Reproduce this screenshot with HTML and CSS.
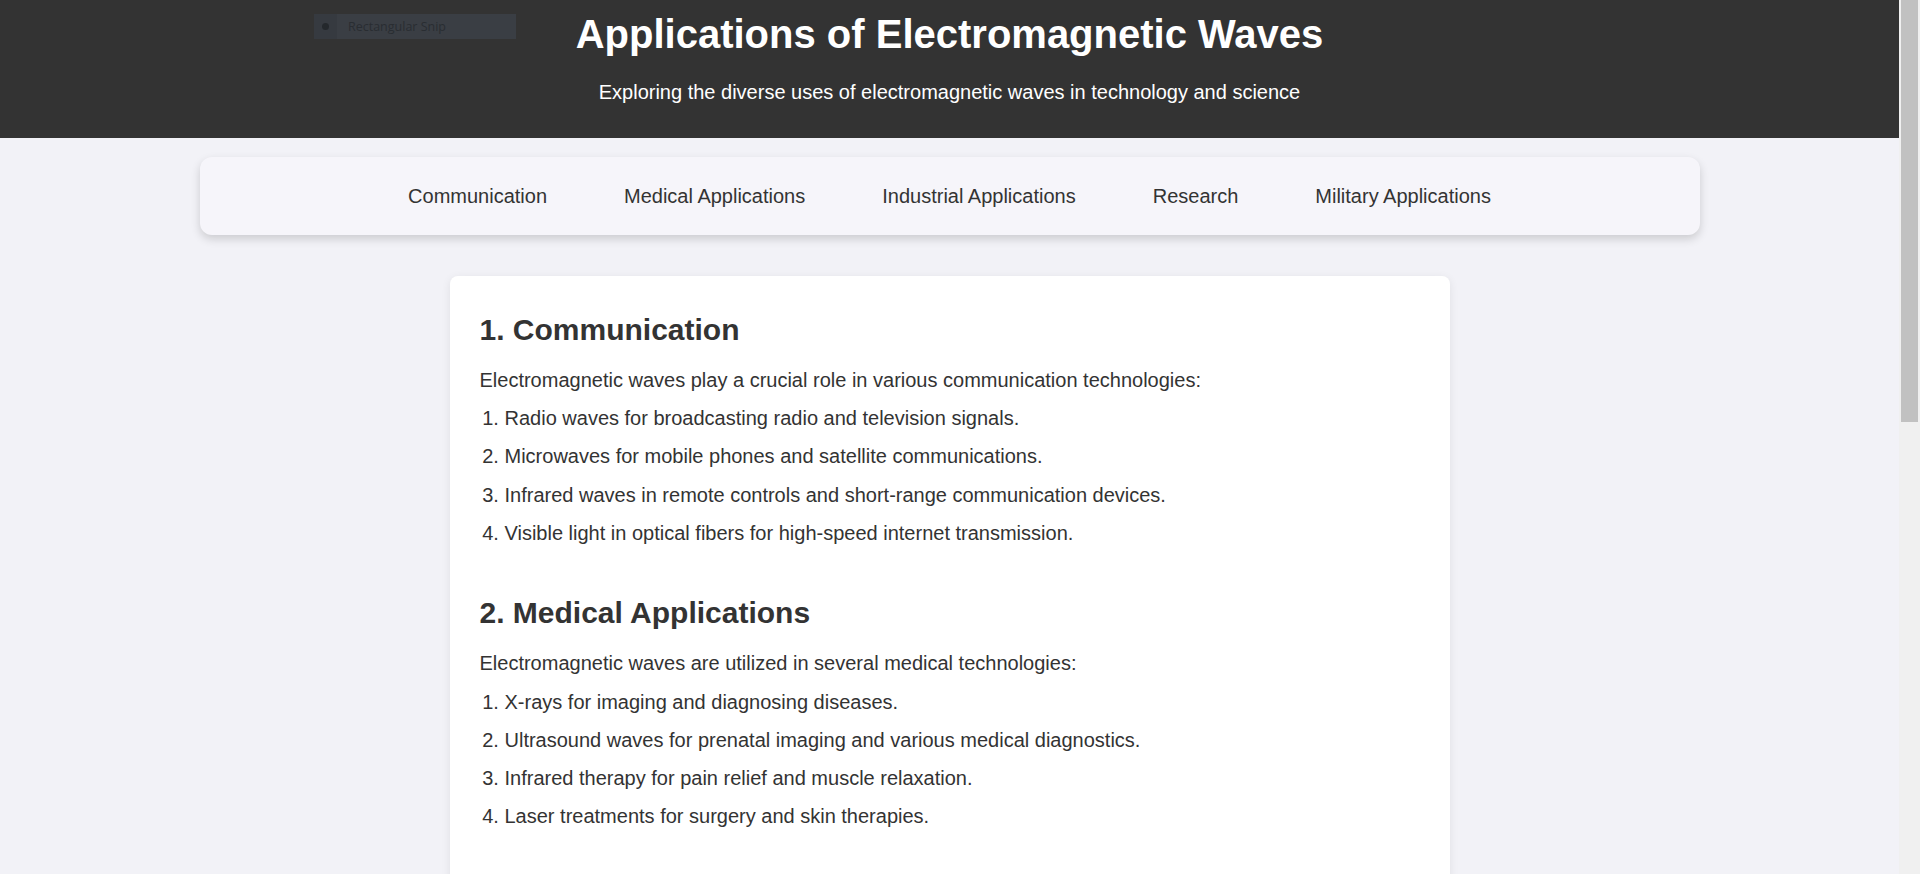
FILE: index.html
```html
<!DOCTYPE html>
<html lang="en">
<head>
<meta charset="UTF-8">
<title>Applications of Electromagnetic Waves</title>
<link rel="stylesheet" href="styles.css">
</head>
<body>
<header class="site-header">
  <h1 class="site-title">Applications of Electromagnetic Waves</h1>
  <p class="site-subtitle">Exploring the diverse uses of electromagnetic waves in technology and science</p>
  <div class="snip-overlay"><span class="snip-dot"></span><span class="snip-label">Rectangular Snip</span></div>
</header>

<nav class="main-nav">
  <ul class="nav-list">
    <li><a href="#communication" class="nav-link">Communication</a></li>
    <li><a href="#medical" class="nav-link">Medical Applications</a></li>
    <li><a href="#industrial" class="nav-link">Industrial Applications</a></li>
    <li><a href="#research" class="nav-link">Research</a></li>
    <li><a href="#military" class="nav-link">Military Applications</a></li>
  </ul>
</nav>

<main class="content-card">
  <section class="topic" id="communication">
    <h2 class="topic-title">1. Communication</h2>
    <p class="topic-intro">Electromagnetic waves play a crucial role in various communication technologies:</p>
    <ol class="topic-list">
      <li>Radio waves for broadcasting radio and television signals.</li>
      <li>Microwaves for mobile phones and satellite communications.</li>
      <li>Infrared waves in remote controls and short-range communication devices.</li>
      <li>Visible light in optical fibers for high-speed internet transmission.</li>
    </ol>
  </section>

  <section class="topic" id="medical">
    <h2 class="topic-title">2. Medical Applications</h2>
    <p class="topic-intro">Electromagnetic waves are utilized in several medical technologies:</p>
    <ol class="topic-list">
      <li>X-rays for imaging and diagnosing diseases.</li>
      <li>Ultrasound waves for prenatal imaging and various medical diagnostics.</li>
      <li>Infrared therapy for pain relief and muscle relaxation.</li>
      <li>Laser treatments for surgery and skin therapies.</li>
    </ol>
  </section>

  <section class="topic" id="industrial">
    <h2 class="topic-title">3. Industrial Applications</h2>
    <p class="topic-intro">Industries rely on electromagnetic waves for many processes:</p>
    <ol class="topic-list">
      <li>Microwave heating for drying and processing materials.</li>
      <li>Infrared thermography for detecting heat loss and equipment faults.</li>
      <li>Ultraviolet light for sterilization and curing of coatings.</li>
      <li>X-ray inspection for detecting defects in manufactured products.</li>
    </ol>
  </section>

  <section class="topic" id="research">
    <h2 class="topic-title">4. Research</h2>
    <p class="topic-intro">Scientists use electromagnetic waves to study the universe and matter:</p>
    <ol class="topic-list">
      <li>Radio telescopes for observing distant galaxies and cosmic phenomena.</li>
      <li>Spectroscopy for analyzing the composition of materials.</li>
      <li>X-ray crystallography for determining molecular structures.</li>
      <li>Gamma-ray detectors for studying high-energy astrophysical events.</li>
    </ol>
  </section>

  <section class="topic" id="military">
    <h2 class="topic-title">5. Military Applications</h2>
    <p class="topic-intro">Electromagnetic waves are essential in defense technologies:</p>
    <ol class="topic-list">
      <li>Radar systems for detecting aircraft, ships and weather.</li>
      <li>Infrared night-vision devices for surveillance.</li>
      <li>Secure radio communication between units.</li>
      <li>Laser range finders and targeting systems.</li>
    </ol>
  </section>
</main>

<footer class="site-footer">
  <p>&copy; 2024 Applications of Electromagnetic Waves</p>
</footer>

<div class="fake-scrollbar" aria-hidden="true"><div class="fake-thumb"></div></div>
</body>
</html>
```

FILE: styles.css
```css
html, body {
  margin: 0;
  padding: 0;
}

html {
  background: #f2f2f7;
}

body {
  margin-right: 21px;
  background: #f2f2f7;
  color: #333333;
  font-family: "Liberation Sans", Arial, sans-serif;
}

.site-header {
  position: relative;
  background: #333333;
  color: #ffffff;
  text-align: center;
  padding: 11px 20px 34px;
}

.site-title {
  margin: 0 0 24px;
  font-size: 40px;
  font-weight: bold;
  line-height: 46px;
}

.site-subtitle {
  margin: 0;
  font-size: 20px;
  line-height: 23px;
}

.snip-overlay {
  position: absolute;
  left: 314px;
  top: 14px;
  width: 202px;
  height: 25px;
  background: #3a3e44;
  display: flex;
  align-items: center;
  text-align: left;
}

.snip-dot {
  width: 23px;
  height: 25px;
  background: #363a40;
  position: relative;
  flex: none;
}

.snip-dot::after {
  content: "";
  position: absolute;
  left: 8px;
  top: 9px;
  width: 7px;
  height: 7px;
  border-radius: 50%;
  background: #24282c;
}

.snip-label {
  margin-left: 11px;
  font-family: "Open Sans", "Noto Sans", sans-serif;
  font-size: 12.5px;
  color: #292d32;
}

.main-nav {
  max-width: 1500px;
  margin: 19px auto 0;
  background: #f6f5fa;
  border-radius: 12px;
  box-shadow: 0 4px 10px rgba(0, 0, 0, 0.16);
  padding: 27.5px 0;
}

.nav-list {
  list-style: none;
  margin: 0;
  padding: 0;
  display: flex;
  justify-content: center;
  gap: 77px;
}

.nav-link {
  color: #333333;
  text-decoration: none;
  font-size: 20px;
  line-height: 23px;
  display: block;
}

.content-card {
  display: block;
  box-sizing: border-box;
  max-width: 1000px;
  margin: 41px auto 40px;
  background: #ffffff;
  border-radius: 8px;
  box-shadow: 0 2px 10px rgba(0, 0, 0, 0.08);
  padding: 36.6px 30px 30px;
}

.topic {
  margin-bottom: 47.3px;
}

.topic:last-child {
  margin-bottom: 0;
}

.topic-title {
  margin: 0 0 16.6px;
  font-size: 30px;
  font-weight: bold;
  line-height: 34.5px;
  color: #333333;
}

.topic-intro {
  margin: 0 0 6.3px;
  font-size: 20px;
  line-height: 32px;
}

.topic-list {
  margin: 0;
  padding-left: 25px;
  font-size: 20px;
  line-height: 32px;
}

.topic-list li {
  margin-bottom: 6.3px;
}

.site-footer {
  background: #333333;
  color: #ffffff;
  text-align: center;
  padding: 20px;
  font-size: 18px;
}

.site-footer p {
  margin: 0;
}

.fake-scrollbar {
  position: fixed;
  top: 0;
  right: 0;
  width: 21px;
  height: 100vh;
  background: #f0f0f0;
}

.fake-thumb {
  margin: 0 2px 0 2px;
  height: 422px;
  background: #c1c1c1;
}
```
